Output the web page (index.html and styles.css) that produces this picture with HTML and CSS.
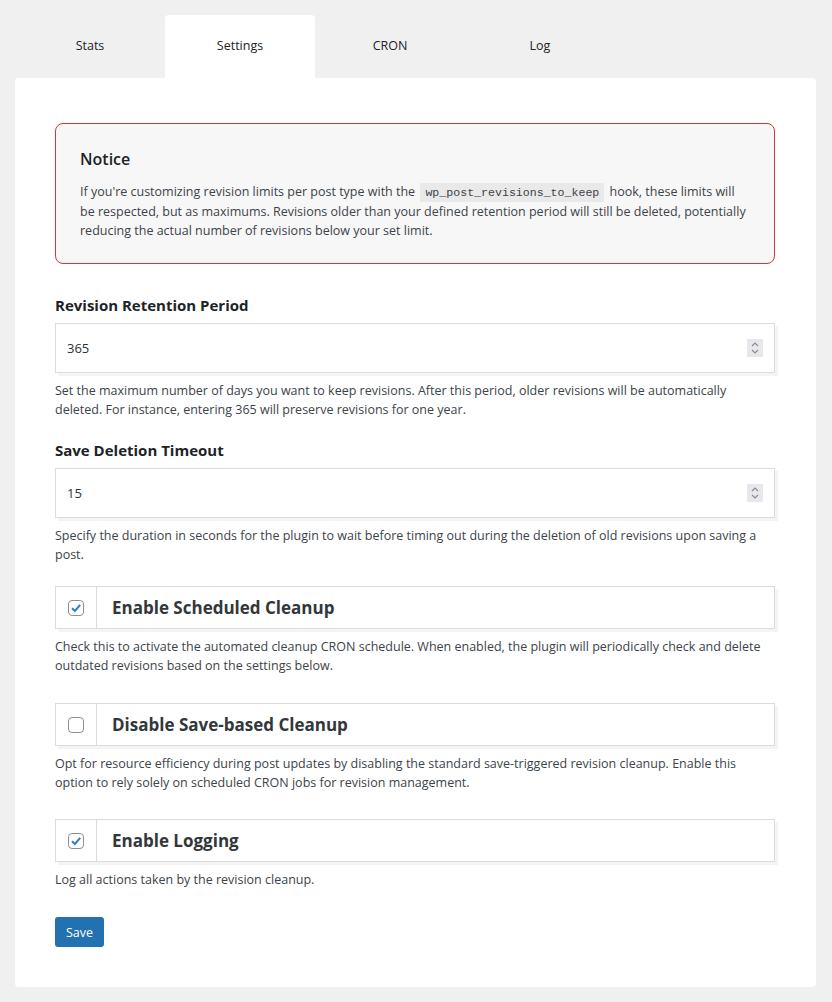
FILE: index.html
```html
<!DOCTYPE html>
<html lang="en">
<head>
<meta charset="utf-8">
<title>Settings</title>
<link rel="stylesheet" href="styles.css">
</head>
<body>
<div class="page">
  <nav class="tabs">
    <a class="tab" href="#">Stats</a>
    <a class="tab active" href="#">Settings</a>
    <a class="tab" href="#">CRON</a>
    <a class="tab" href="#">Log</a>
  </nav>
  <main class="card">
    <div class="notice">
      <h2 class="notice-title">Notice</h2>
      <p class="notice-text">If you're customizing revision limits per post type with the <code>wp_post_revisions_to_keep</code> hook, these limits will<br>be respected, but as maximums. Revisions older than your defined retention period will still be deleted, potentially<br>reducing the actual number of revisions below your set limit.</p>
    </div>

    <div class="field">
      <label class="field-label" for="ret">Revision Retention Period</label>
      <div class="input-box">
        <input id="ret" class="input" type="text" value="365">
        <span class="spinner"><svg width="16" height="18" viewBox="0 0 16 18"><path d="M5 7 L8 4 L11 7 M5 11 L8 14 L11 11" fill="none" stroke="#8a8a92" stroke-width="1.2"/></svg></span>
      </div>
      <p class="desc">Set the maximum number of days you want to keep revisions. After this period, older revisions will be automatically<br>deleted. For instance, entering 365 will preserve revisions for one year.</p>
    </div>

    <div class="field field-last">
      <label class="field-label" for="tmo">Save Deletion Timeout</label>
      <div class="input-box">
        <input id="tmo" class="input" type="text" value="15">
        <span class="spinner"><svg width="16" height="18" viewBox="0 0 16 18"><path d="M5 7 L8 4 L11 7 M5 11 L8 14 L11 11" fill="none" stroke="#8a8a92" stroke-width="1.2"/></svg></span>
      </div>
      <p class="desc">Specify the duration in seconds for the plugin to wait before timing out during the deletion of old revisions upon saving a<br>post.</p>
    </div>

    <div class="check-field">
      <div class="check-row">
        <span class="check-cell"><span class="checkbox checked"><svg width="14" height="14" viewBox="0 0 14 14"><path d="M3 7.2 L5.9 10 L11.2 3.8" fill="none" stroke="#2f7fc1" stroke-width="2"/></svg></span></span>
        <span class="check-label">Enable Scheduled Cleanup</span>
      </div>
      <p class="desc">Check this to activate the automated cleanup CRON schedule. When enabled, the plugin will periodically check and delete<br>outdated revisions based on the settings below.</p>
    </div>

    <div class="check-field check-field-tight">
      <div class="check-row">
        <span class="check-cell"><span class="checkbox"></span></span>
        <span class="check-label">Disable Save-based Cleanup</span>
      </div>
      <p class="desc">Opt for resource efficiency during post updates by disabling the standard save-triggered revision cleanup. Enable this<br>option to rely solely on scheduled CRON jobs for revision management.</p>
    </div>

    <div class="check-field">
      <div class="check-row">
        <span class="check-cell"><span class="checkbox checked"><svg width="14" height="14" viewBox="0 0 14 14"><path d="M3 7.2 L5.9 10 L11.2 3.8" fill="none" stroke="#2f7fc1" stroke-width="2"/></svg></span></span>
        <span class="check-label">Enable Logging</span>
      </div>
      <p class="desc">Log all actions taken by the revision cleanup.</p>
    </div>

    <button class="save" type="button">Save</button>
  </main>
</div>
</body>
</html>
```

FILE: styles.css
```css
html, body {
  margin: 0;
  background: #f0f0f0;
}
body {
  font-family: "Open Sans", "Noto Sans", sans-serif;
  font-size: 12.5px;
  color: #3c434a;
}
.page {
  padding: 15px 16px 15px 15px;
}
.tabs {
  display: flex;
}
.tab {
  box-sizing: border-box;
  width: 150px;
  height: 63px;
  padding-bottom: 3px;
  display: flex;
  align-items: center;
  justify-content: center;
  color: #1d2327;
  text-decoration: none;
  border-radius: 4px 4px 0 0;
}
.tab.active {
  background: #fff;
}
.card {
  display: block;
  background: #fff;
  border-radius: 4px;
  padding: 45px 41px 40px 40px;
}
.notice {
  border: 1px solid #d63638;
  border-radius: 8px;
  background: #f7f7f7;
  padding: 24px 24px 23px;
  margin-bottom: 31px;
}
.notice-title {
  margin: 0 0 12px;
  font-size: 16px;
  font-weight: 600;
  line-height: 22px;
  color: #1d2327;
}
.notice-text {
  margin: 0;
  line-height: 19px;
  white-space: nowrap;
}
code {
  font-family: "Liberation Mono", monospace;
  font-size: 11.6px;
  background: #e9e9e9;
  padding: 3px 5px;
  margin: 0 2px;
  color: #3c434a;
}
.field {
  margin-bottom: 21px;
}
.field-last {
  margin-bottom: 22px;
}
.field-label {
  display: block;
  font-size: 15px;
  font-weight: 700;
  line-height: 20px;
  margin-bottom: 8px;
  color: #1d2327;
}
.input-box {
  box-sizing: border-box;
  height: 50px;
  border: 1px solid #dcdcde;
  box-shadow: 3px 3px 0 #f4f4f4;
  display: flex;
  align-items: center;
  padding: 0 11px 0 11px;
  background: #fff;
}
.input {
  flex: 1;
  border: 0;
  outline: 0;
  padding: 0;
  font: inherit;
  font-size: 13px;
  color: #2c3338;
  background: transparent;
}
.spinner {
  width: 16px;
  height: 18px;
  background: #e8e8ec;
  display: flex;
}
.desc {
  margin: 8px 0 0;
  line-height: 19px;
  white-space: nowrap;
}
.check-field {
  margin-bottom: 28px;
}
.check-field-tight {
  margin-bottom: 27px;
}
.check-row {
  box-sizing: border-box;
  height: 43px;
  border: 1px solid #dcdcde;
  box-shadow: 3px 3px 0 #f4f4f4;
  display: flex;
  background: #fff;
}
.check-cell {
  width: 40px;
  border-right: 1px solid #dcdcde;
  display: flex;
  align-items: center;
  justify-content: center;
}
.checkbox {
  box-sizing: border-box;
  width: 16px;
  height: 16px;
  border: 1px solid #8c8f94;
  border-radius: 4px;
  background: #fff;
  display: flex;
  align-items: center;
  justify-content: center;
}
.check-label {
  display: flex;
  align-items: center;
  padding-left: 15px;
  font-size: 17px;
  font-weight: 700;
  color: #32373c;
}
.save {
  display: block;
  height: 30px;
  padding: 0 11px;
  border: 0;
  border-radius: 3px;
  background: #2271b1;
  color: #fff;
  font: inherit;
  font-size: 12.5px;
  cursor: pointer;
}
```
